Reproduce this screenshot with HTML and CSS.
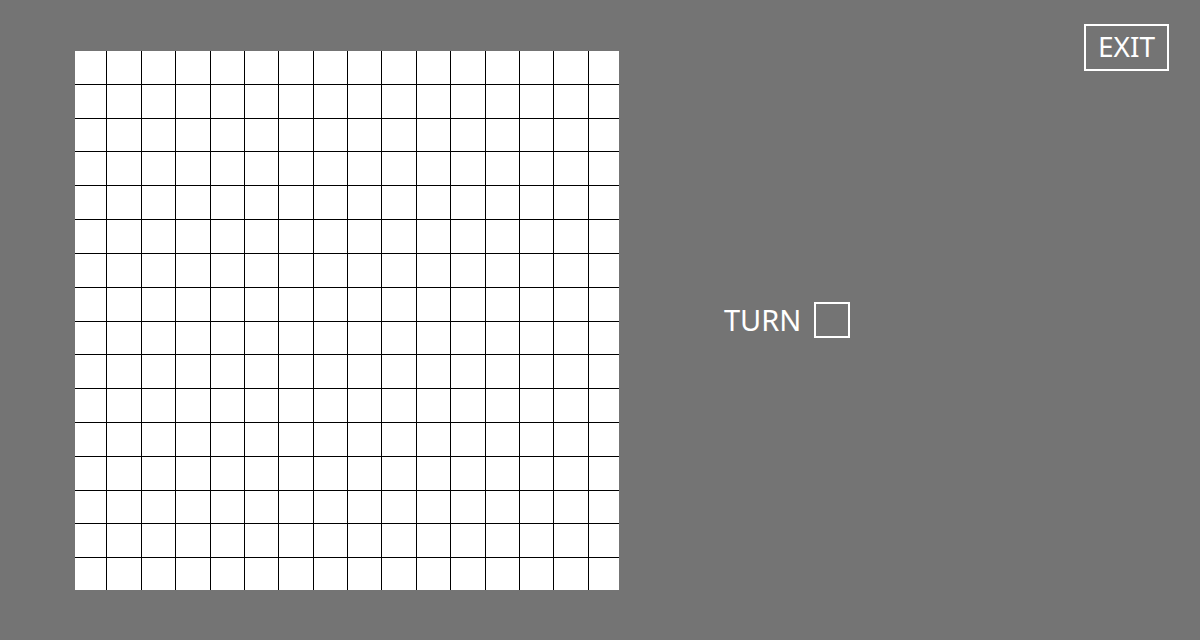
FILE: index.html
```html
<!DOCTYPE html>
<html>
<head>
<meta charset="utf-8">
<link rel="stylesheet" href="styles.css">
</head>
<body>
<div class="page">
  <div class="board">
    <div class="cells">
      <span class="c"></span><span class="c"></span><span class="c"></span><span class="c"></span><span class="c"></span><span class="c"></span><span class="c"></span><span class="c"></span><span class="c"></span><span class="c"></span><span class="c"></span><span class="c"></span><span class="c"></span><span class="c"></span><span class="c"></span><span class="c"></span>
      <span class="c"></span><span class="c"></span><span class="c"></span><span class="c"></span><span class="c"></span><span class="c"></span><span class="c"></span><span class="c"></span><span class="c"></span><span class="c"></span><span class="c"></span><span class="c"></span><span class="c"></span><span class="c"></span><span class="c"></span><span class="c"></span>
      <span class="c"></span><span class="c"></span><span class="c"></span><span class="c"></span><span class="c"></span><span class="c"></span><span class="c"></span><span class="c"></span><span class="c"></span><span class="c"></span><span class="c"></span><span class="c"></span><span class="c"></span><span class="c"></span><span class="c"></span><span class="c"></span>
      <span class="c"></span><span class="c"></span><span class="c"></span><span class="c"></span><span class="c"></span><span class="c"></span><span class="c"></span><span class="c"></span><span class="c"></span><span class="c"></span><span class="c"></span><span class="c"></span><span class="c"></span><span class="c"></span><span class="c"></span><span class="c"></span>
      <span class="c"></span><span class="c"></span><span class="c"></span><span class="c"></span><span class="c"></span><span class="c"></span><span class="c"></span><span class="c"></span><span class="c"></span><span class="c"></span><span class="c"></span><span class="c"></span><span class="c"></span><span class="c"></span><span class="c"></span><span class="c"></span>
      <span class="c"></span><span class="c"></span><span class="c"></span><span class="c"></span><span class="c"></span><span class="c"></span><span class="c"></span><span class="c"></span><span class="c"></span><span class="c"></span><span class="c"></span><span class="c"></span><span class="c"></span><span class="c"></span><span class="c"></span><span class="c"></span>
      <span class="c"></span><span class="c"></span><span class="c"></span><span class="c"></span><span class="c"></span><span class="c"></span><span class="c"></span><span class="c"></span><span class="c"></span><span class="c"></span><span class="c"></span><span class="c"></span><span class="c"></span><span class="c"></span><span class="c"></span><span class="c"></span>
      <span class="c"></span><span class="c"></span><span class="c"></span><span class="c"></span><span class="c"></span><span class="c"></span><span class="c"></span><span class="c"></span><span class="c"></span><span class="c"></span><span class="c"></span><span class="c"></span><span class="c"></span><span class="c"></span><span class="c"></span><span class="c"></span>
      <span class="c"></span><span class="c"></span><span class="c"></span><span class="c"></span><span class="c"></span><span class="c"></span><span class="c"></span><span class="c"></span><span class="c"></span><span class="c"></span><span class="c"></span><span class="c"></span><span class="c"></span><span class="c"></span><span class="c"></span><span class="c"></span>
      <span class="c"></span><span class="c"></span><span class="c"></span><span class="c"></span><span class="c"></span><span class="c"></span><span class="c"></span><span class="c"></span><span class="c"></span><span class="c"></span><span class="c"></span><span class="c"></span><span class="c"></span><span class="c"></span><span class="c"></span><span class="c"></span>
      <span class="c"></span><span class="c"></span><span class="c"></span><span class="c"></span><span class="c"></span><span class="c"></span><span class="c"></span><span class="c"></span><span class="c"></span><span class="c"></span><span class="c"></span><span class="c"></span><span class="c"></span><span class="c"></span><span class="c"></span><span class="c"></span>
      <span class="c"></span><span class="c"></span><span class="c"></span><span class="c"></span><span class="c"></span><span class="c"></span><span class="c"></span><span class="c"></span><span class="c"></span><span class="c"></span><span class="c"></span><span class="c"></span><span class="c"></span><span class="c"></span><span class="c"></span><span class="c"></span>
      <span class="c"></span><span class="c"></span><span class="c"></span><span class="c"></span><span class="c"></span><span class="c"></span><span class="c"></span><span class="c"></span><span class="c"></span><span class="c"></span><span class="c"></span><span class="c"></span><span class="c"></span><span class="c"></span><span class="c"></span><span class="c"></span>
      <span class="c"></span><span class="c"></span><span class="c"></span><span class="c"></span><span class="c"></span><span class="c"></span><span class="c"></span><span class="c"></span><span class="c"></span><span class="c"></span><span class="c"></span><span class="c"></span><span class="c"></span><span class="c"></span><span class="c"></span><span class="c"></span>
      <span class="c"></span><span class="c"></span><span class="c"></span><span class="c"></span><span class="c"></span><span class="c"></span><span class="c"></span><span class="c"></span><span class="c"></span><span class="c"></span><span class="c"></span><span class="c"></span><span class="c"></span><span class="c"></span><span class="c"></span><span class="c"></span>
      <span class="c"></span><span class="c"></span><span class="c"></span><span class="c"></span><span class="c"></span><span class="c"></span><span class="c"></span><span class="c"></span><span class="c"></span><span class="c"></span><span class="c"></span><span class="c"></span><span class="c"></span><span class="c"></span><span class="c"></span><span class="c"></span>
    </div>
  </div>
  <div class="turn">
    <span class="turn-label">TURN</span>
    <span class="turn-box"></span>
  </div>
  <button class="exit">EXIT</button>
</div>
</body>
</html>
```

FILE: styles.css
```css
html, body {
  margin: 0;
  padding: 0;
}
body {
  background: #747474;
  font-family: "Noto Sans", "Open Sans", sans-serif;
  color: #fff;
}
.page {
  height: 640px;
  display: flex;
  align-items: center;
  padding-left: 75px;
  box-sizing: border-box;
}
.board {
  width: 544px;
  height: 539px;
  overflow: hidden;
  background: #fff;
  margin-top: 1px;
  flex: none;
}
.cells {
  width: 550px;
  height: 541px;
  margin: -1px 0 0 -3px;
  display: grid;
  grid-template-columns: repeat(16, 1fr);
  grid-template-rows: repeat(16, 1fr);
}
.c {
  box-sizing: border-box;
  border-left: 1px solid #000;
  border-top: 1px solid #000;
  background: #fff;
}
.turn {
  display: flex;
  align-items: center;
  margin-left: 105px;
  gap: 13px;
  margin-top: 0;
}
.turn-label {
  font-size: 29px;
  line-height: 36px;
}
.turn-box {
  width: 36px;
  height: 36px;
  box-sizing: border-box;
  border: 2px solid #fff;
}
.exit {
  align-self: flex-start;
  margin: 24px 31px 0 auto;
  width: 85px;
  height: 47px;
  box-sizing: border-box;
  border: 2px solid #fff;
  background: transparent;
  color: #fff;
  font-family: "Noto Sans", "Open Sans", sans-serif;
  font-size: 28px;
  line-height: 1;
  padding: 0 0 3px;
}
```
